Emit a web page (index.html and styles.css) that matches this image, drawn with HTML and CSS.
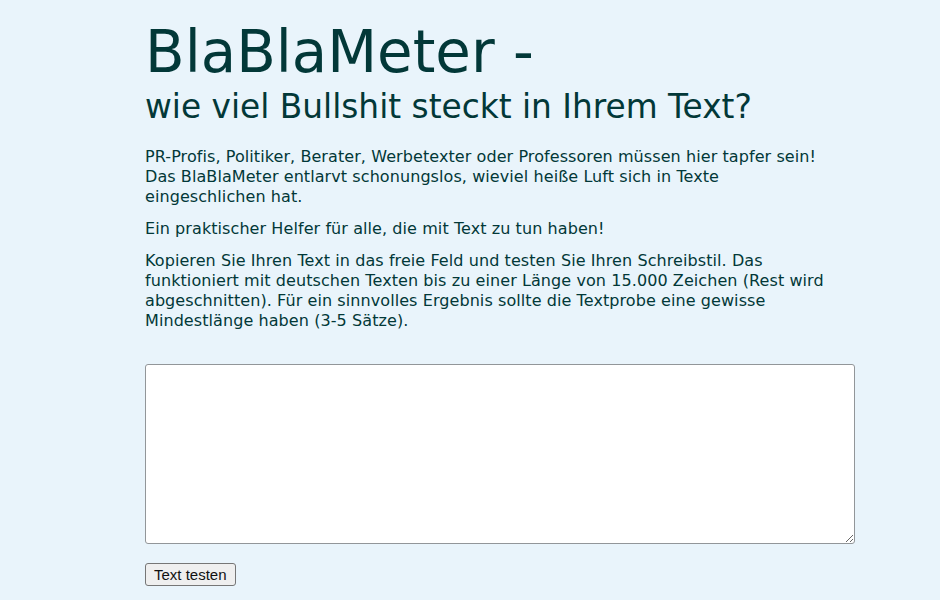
FILE: index.html
```html
<!DOCTYPE html>
<html lang="de">
<head>
<meta charset="utf-8">
<title>BlaBlaMeter</title>
<link rel="stylesheet" href="styles.css">
</head>
<body>
<main class="page">
  <h1 class="title">BlaBlaMeter -</h1>
  <h2 class="subtitle">wie viel Bullshit steckt in Ihrem Text?</h2>
  <div class="intro">
    <p>PR-Profis, Politiker, Berater, Werbetexter oder Professoren müssen hier tapfer sein! Das BlaBlaMeter entlarvt schonungslos, wieviel heiße Luft sich in Texte eingeschlichen hat.</p>
    <p>Ein praktischer Helfer für alle, die mit Text zu tun haben!</p>
    <p>Kopieren Sie Ihren Text in das freie Feld und testen Sie Ihren Schreibstil. Das funktioniert mit deutschen Texten bis zu einer Länge von 15.000 Zeichen (Rest wird abgeschnitten). Für ein sinnvolles Ergebnis sollte die Textprobe eine gewisse Mindestlänge haben (3-5 Sätze).</p>
  </div>
  <form class="form">
    <textarea class="input" name="text"></textarea>
    <button type="button" class="submit">Text testen</button>
  </form>
</main>
</body>
</html>
```
FILE: styles.css
```css
html, body {
  margin: 0;
  padding: 0;
  background: #e9f4fb;
}
.page {
  padding: 21px 0 0 145px;
  color: #023838;
  font-family: "DejaVu Sans", Verdana, sans-serif;
}
.title {
  margin: 0;
  font-size: 57.8px;
  line-height: 62px;
  font-weight: normal;
}
.subtitle {
  margin: 5px 0 0;
  font-size: 32.8px;
  line-height: 38px;
  font-weight: normal;
}
.intro {
  margin-top: 21px;
  width: 690px;
  font-size: 16px;
  line-height: 20px;
  letter-spacing: 0.08px;
}
.intro p {
  margin: 0 0 12px;
}
.form {
  margin-top: 33px;
  display: flex;
  flex-direction: column;
  align-items: flex-start;
  gap: 19px;
}
.input {
  box-sizing: border-box;
  width: 710px;
  height: 180px;
  margin: 0;
  background: #fff;
  border: 1px solid #929699;
  border-radius: 3px;
  resize: vertical;
}
.submit {
  box-sizing: border-box;
  height: 23px;
  padding: 0 8px;
  font-family: "Liberation Sans", Arial, sans-serif;
  font-size: 15px;
  color: #111;
  background: #efefef;
  border: 1px solid #767676;
  border-radius: 3px;
}
```
